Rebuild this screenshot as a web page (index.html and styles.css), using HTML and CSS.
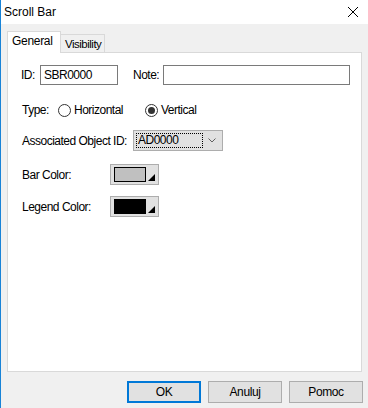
FILE: index.html
```html
<!DOCTYPE html>
<html lang="en">
<head>
    <meta charset="UTF-8">
    <title>Scroll Bar</title>
    <link rel="stylesheet" href="styles.css">
</head>
<body>
    <div class="window">
        <div class="titlebar">
            <span class="title">Scroll Bar</span>
            <svg class="close" width="12" height="12" viewBox="0 0 12 12">
                <path d="M1 1 L11 11 M11 1 L1 11" stroke="#000" stroke-width="1" fill="none"/>
            </svg>
        </div>
        <div class="client">
            <div class="tabs">
                <div class="tab active">General</div>
                <div class="tab">Visibility</div>
            </div>
            <div class="panel">
                <div class="row row-id">
                    <span class="lbl lbl-id">ID:</span>
                    <div class="edit edit-id">SBR0000</div>
                    <span class="lbl lbl-note">Note:</span>
                    <div class="edit edit-note"></div>
                </div>
                <div class="row row-type">
                    <span class="lbl lbl-type">Type:</span>
                    <span class="radio radio-first"><span class="dot"></span>Horizontal</span>
                    <span class="radio"><span class="dot checked"></span>Vertical</span>
                </div>
                <div class="row row-combo">
                    <span class="lbl lbl-wide">Associated Object ID:</span>
                    <div class="combo">
                        <span class="focus">AD0000</span>
                        <svg class="chevron" width="8" height="5" viewBox="0 0 8 5">
                            <path d="M0.5 0.5 L4 4 L7.5 0.5" stroke="#606060" fill="none"/>
                        </svg>
                    </div>
                </div>
                <div class="row row-color">
                    <span class="lbl lbl-color">Bar Color:</span>
                    <div class="colorbtn">
                        <span class="swatch swatch-gray"></span>
                        <span class="corner"></span>
                    </div>
                </div>
                <div class="row row-color row-legend">
                    <span class="lbl lbl-color">Legend Color:</span>
                    <div class="colorbtn">
                        <span class="swatch swatch-black"></span>
                        <span class="corner"></span>
                    </div>
                </div>
            </div>
            <div class="buttons">
                <button class="btn default">OK</button>
                <button class="btn">Anuluj</button>
                <button class="btn">Pomoc</button>
            </div>
        </div>
    </div>
</body>
</html>
```

FILE: styles.css
```css
body {
    margin: 0;
    font-family: "Liberation Sans", Arial, sans-serif;
    font-size: 12px;
    letter-spacing: -0.5px;
    color: #000;
}
.window {
    width: 367px;
    height: 408px;
    border-left: 1px solid #1883d7;
    background-color: #f0f0f0;
    display: flex;
    flex-direction: column;
}
.titlebar {
    height: 24px;
    background-color: #fff;
    display: flex;
    align-items: center;
    justify-content: space-between;
    padding-left: 3px;
    padding-right: 9px;
}
.title {
    font-size: 12px;
    letter-spacing: 0;
}
.client {
    padding: 8px 6px 0 6px;
}
.tabs {
    display: flex;
    align-items: flex-end;
    height: 20px;
}
.tab {
    height: 17px;
    line-height: 18px;
    padding: 0 4px;
    border: 1px solid #d9d9d9;
    border-bottom: none;
    background-color: #f0f0f0;
    font-size: 11.5px;
    letter-spacing: -0.5px;
}
.tab.active {
    height: 21px;
    line-height: 19px;
    width: 44px;
    padding: 0 4px;
    margin-bottom: -1px;
    background-color: #fff;
    position: relative;
    font-size: 12px;
    letter-spacing: -0.3px;
}
.tab + .tab {
    border-left: none;
    width: 35px;
}
.panel {
    border: 1px solid #d9d9d9;
    background-color: #fff;
    padding: 12px 0 0 13px;
    box-sizing: border-box;
    height: 320px;
    width: 355px;
}
.row {
    display: flex;
    align-items: center;
}
.row-id {
    height: 20px;
}
.lbl-id {
    width: 19px;
}
.edit {
    height: 20px;
    box-sizing: border-box;
    border: 1px solid #7a7a7a;
    background-color: #fff;
    line-height: 18px;
    padding-left: 3px;
}
.edit-id {
    width: 78px;
}
.lbl-note {
    margin-left: 15px;
    width: 30px;
}
.edit-note {
    width: 187px;
}
.row-type {
    height: 16px;
    margin-top: 17px;
    padding-left: 1px;
}
.lbl-type {
    width: 36px;
}
.radio {
    display: flex;
    align-items: center;
}
.radio-first {
    width: 87px;
}
.dot {
    width: 13px;
    height: 13px;
    box-sizing: border-box;
    border: 1px solid #333;
    border-radius: 50%;
    margin-right: 3px;
    display: flex;
    align-items: center;
    justify-content: center;
}
.dot.checked::after {
    content: "";
    width: 7px;
    height: 7px;
    border-radius: 50%;
    background-color: #333;
}
.row-combo {
    height: 21px;
    margin-top: 12px;
    padding-left: 1px;
}
.lbl-wide {
    width: 111px;
}
.combo {
    width: 90px;
    height: 21px;
    box-sizing: border-box;
    border: 1px solid #adadad;
    background-color: #e1e1e1;
    display: flex;
    align-items: center;
    padding: 0 6px 0 2px;
    justify-content: space-between;
}
.focus {
    width: 67px;
    height: 15px;
    box-sizing: border-box;
    border: 1px dotted #000;
    line-height: 13px;
    padding-left: 1px;
    color: #000;
}
.row-color {
    height: 21px;
    margin-top: 13px;
    padding-left: 1px;
}
.row-legend {
    margin-top: 11px;
}
.lbl-color {
    width: 88px;
}
.colorbtn {
    width: 49px;
    height: 21px;
    box-sizing: border-box;
    border: 1px solid #adadad;
    background-color: #e1e1e1;
    display: flex;
    align-items: flex-start;
    padding: 2px 0 0 3px;
    position: relative;
}
.swatch {
    width: 32px;
    height: 15px;
    box-sizing: border-box;
    border: 1px solid #000;
}
.swatch-gray {
    background-color: #c0c0c0;
}
.swatch-black {
    background-color: #000;
}
.corner {
    position: absolute;
    right: 3px;
    bottom: 3px;
    width: 0;
    height: 0;
    border-left: 7px solid transparent;
    border-bottom: 7px solid #000;
}
.buttons {
    display: flex;
    justify-content: flex-end;
    gap: 7px;
    margin-top: 9px;
    margin-right: -1px;
}
.btn {
    width: 74px;
    height: 22px;
    box-sizing: border-box;
    border: 1px solid #adadad;
    background-color: #e1e1e1;
    font-family: "Liberation Sans", Arial, sans-serif;
    font-size: 12px;
    letter-spacing: -0.4px;
    color: #000;
    padding: 0;
}
.btn.default {
    border: 2px solid #0078d7;
}
```
